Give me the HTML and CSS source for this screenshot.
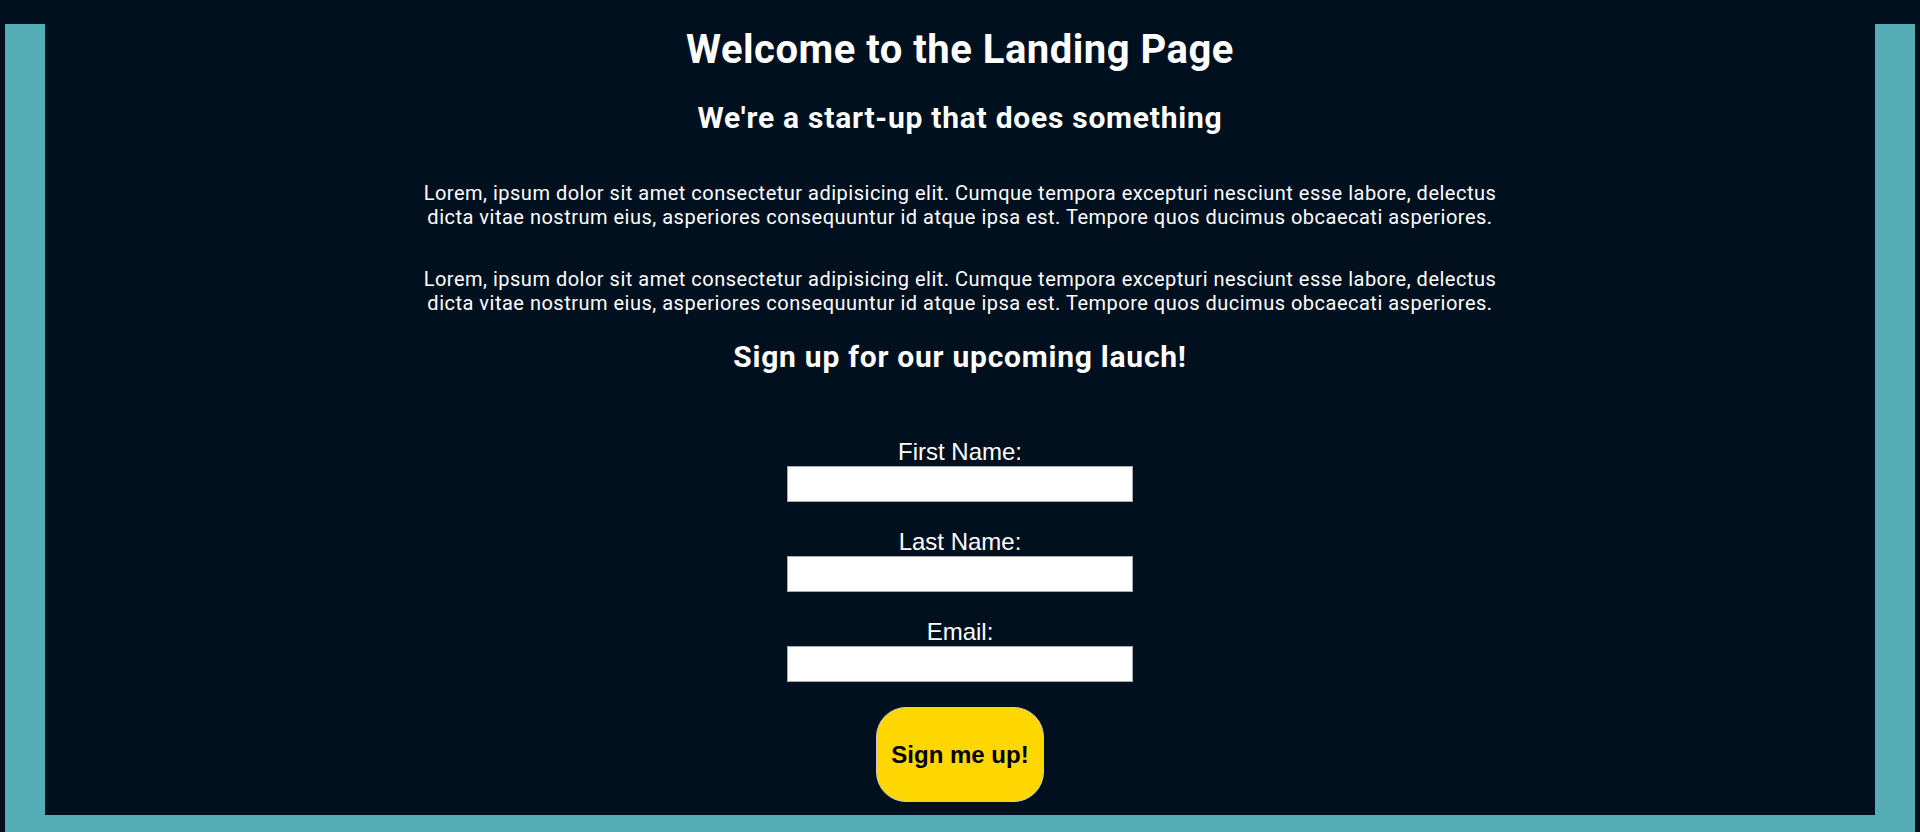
FILE: index.html
```html
<!DOCTYPE html>
<html lang="en">
<head>
<meta charset="utf-8">
<title>Landing Page</title>
<link rel="stylesheet" href="styles.css">
</head>
<body>
<div class="frame">
  <div class="panel">
    <main class="content">
      <h1 class="title">Welcome to the Landing Page</h1>
      <h2 class="subtitle">We're a start-up that does something</h2>
      <p class="blurb">Lorem, ipsum dolor sit amet consectetur adipisicing elit. Cumque tempora excepturi nesciunt esse labore, delectus dicta vitae nostrum eius, asperiores consequuntur id atque ipsa est. Tempore quos ducimus obcaecati asperiores.</p>
      <p class="blurb blurb-second">Lorem, ipsum dolor sit amet consectetur adipisicing elit. Cumque tempora excepturi nesciunt esse labore, delectus dicta vitae nostrum eius, asperiores consequuntur id atque ipsa est. Tempore quos ducimus obcaecati asperiores.</p>
      <h3 class="cta">Sign up for our upcoming lauch!</h3>
      <form class="signup">
        <label class="field-label" for="first">First Name:</label>
        <input class="field-input" type="text" id="first">
        <label class="field-label" for="last">Last Name:</label>
        <input class="field-input" type="text" id="last">
        <label class="field-label" for="email">Email:</label>
        <input class="field-input" type="email" id="email">
        <button class="submit" type="button">Sign me up!</button>
      </form>
    </main>
  </div>
</div>
</body>
</html>
```

FILE: styles.css
```css
html, body {
  margin: 0;
  padding: 0;
}

body {
  background: #00101f;
  color: #ffffff;
  font-family: Roboto, "Liberation Sans", sans-serif;
}

.frame {
  padding: 24px 5px 0;
}

.panel {
  display: flow-root;
  background: #55adb5;
  padding: 0 40px 17px;
}

.content {
  background: #00101f;
  margin-top: -24px;
  display: flex;
  flex-direction: column;
  align-items: center;
  text-align: center;
  padding: 27px 0 13px;
}

.title {
  margin: 0;
  font-size: 40px;
  line-height: 46px;
  font-weight: 700;
  letter-spacing: 0.5px;
}

.subtitle {
  margin: 27px 0 0;
  font-size: 30px;
  line-height: 36px;
  font-weight: 700;
  letter-spacing: 0.75px;
}

.blurb {
  margin: 45px 0 0;
  width: 1100px;
  font-size: 20px;
  line-height: 24px;
  font-weight: 400;
  letter-spacing: 0.5px;
}

.blurb-second {
  margin-top: 38px;
}

.cta {
  margin: 24px 0 0;
  font-size: 30px;
  line-height: 36px;
  font-weight: 700;
  letter-spacing: 0.75px;
}

.signup {
  margin-top: 63px;
  display: flex;
  flex-direction: column;
  align-items: center;
}

.field-label {
  display: block;
  font-family: "Liberation Sans", Arial, sans-serif;
  font-size: 24px;
  line-height: 28px;
}

.field-input {
  box-sizing: border-box;
  width: 346px;
  height: 36px;
  margin: 0 0 26px;
  padding: 1px 2px;
  border: 1px solid #a9a9a9;
  background: #ffffff;
  font-size: 16px;
}

.field-input:last-of-type {
  margin-bottom: 25px;
}

.submit {
  box-sizing: border-box;
  height: 95px;
  padding: 0 14px;
  border: 1px solid #c8c8c8;
  border-radius: 30px;
  background: #ffd700;
  color: #000000;
  font-family: "Liberation Sans", Arial, sans-serif;
  font-size: 24px;
  font-weight: 700;
  cursor: pointer;
}
```
